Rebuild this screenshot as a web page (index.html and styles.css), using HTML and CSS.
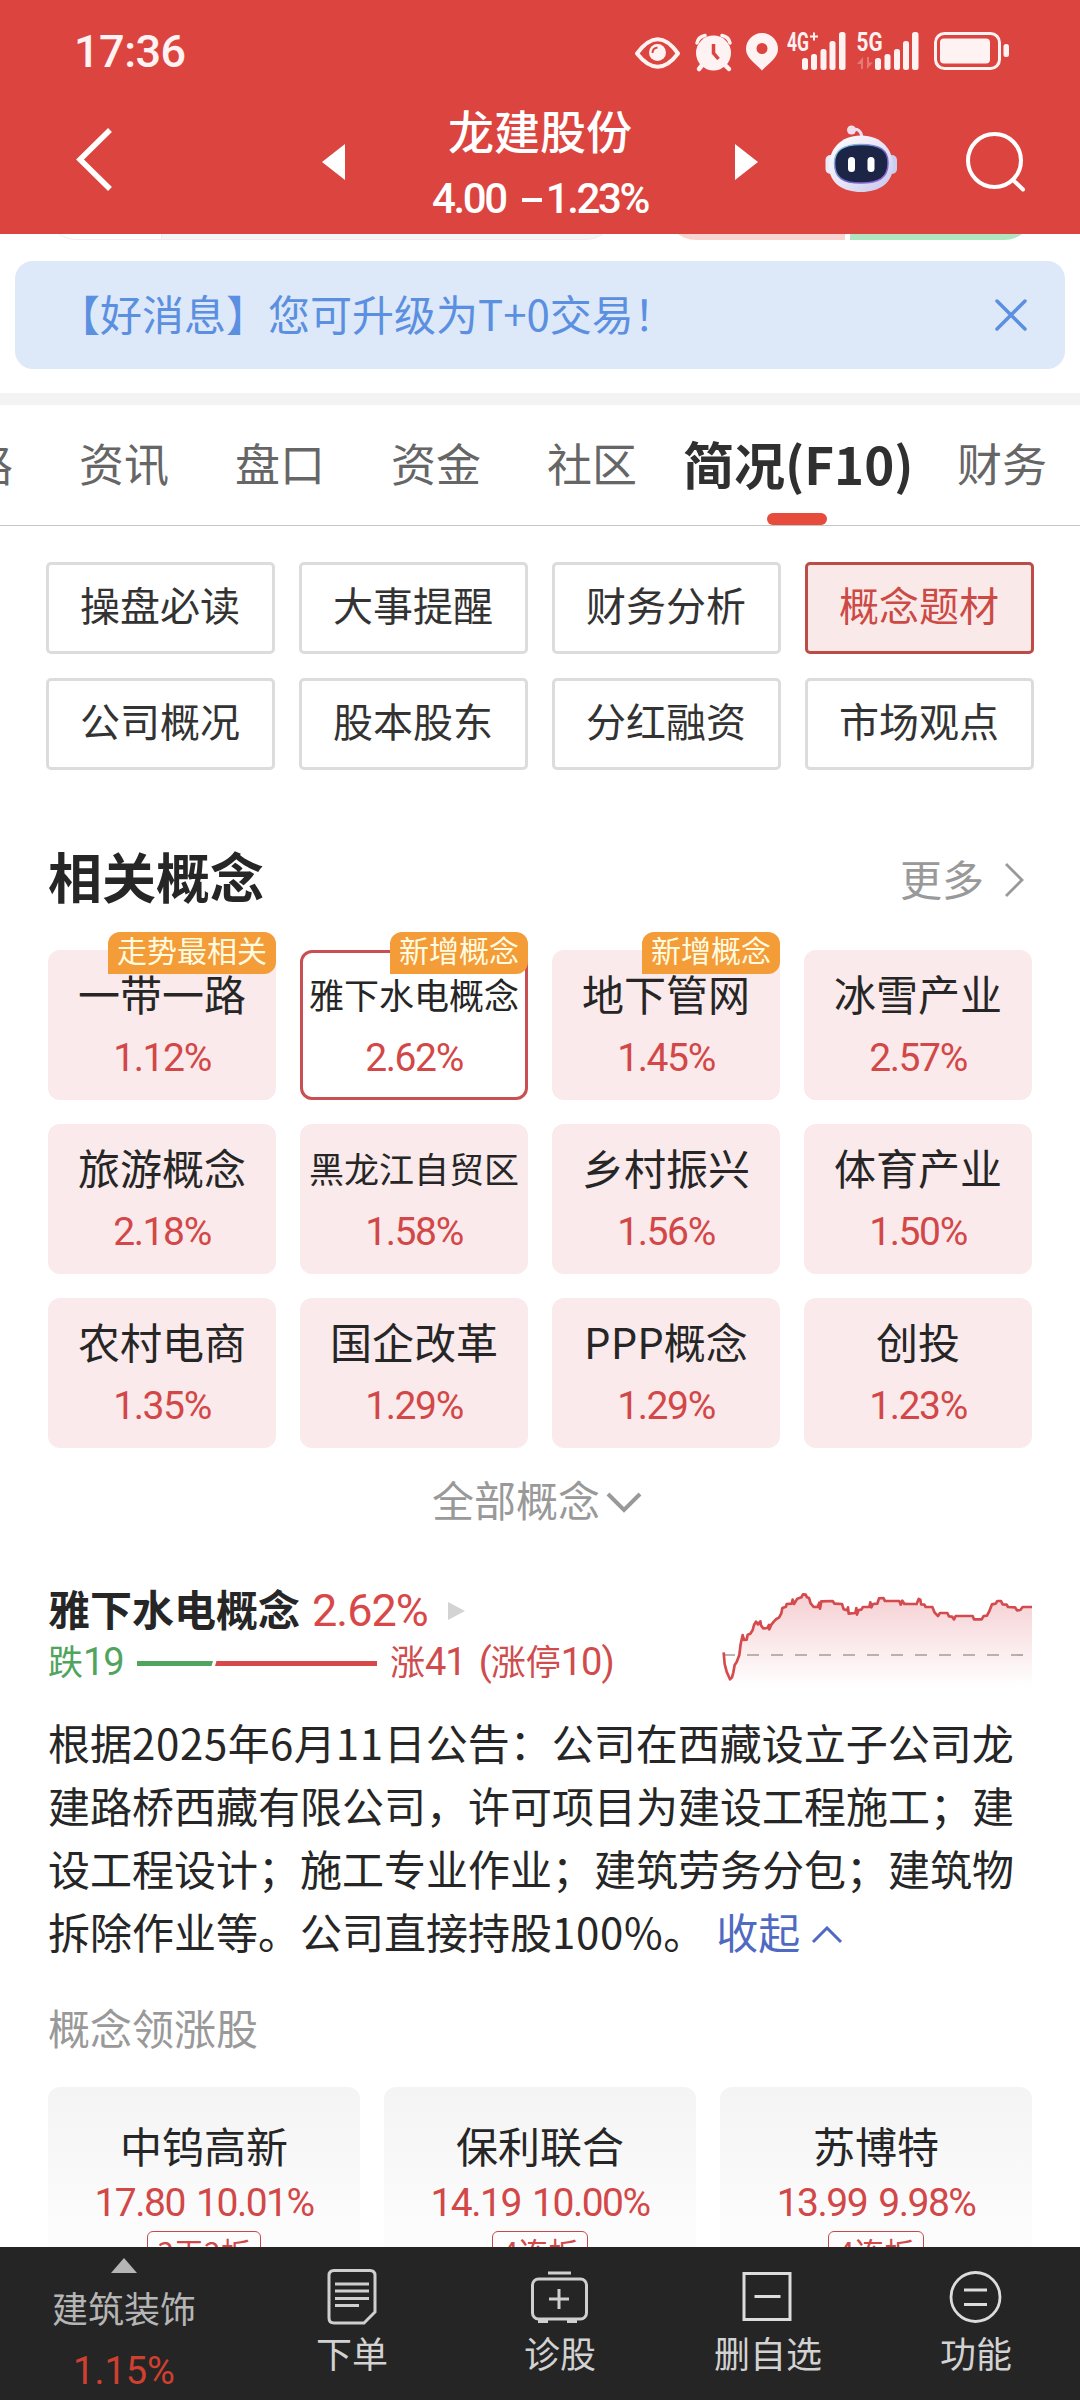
FILE: index.html
```html
<!DOCTYPE html>
<html lang="zh-CN">
  <head>
    <meta charset="UTF-8" />
    <meta name="viewport" content="width=device-width, initial-scale=1.0" />
    <title>龙建股份</title>
    <link rel="stylesheet" href="styles.css">
  </head>
  <body>
    <div class="page">
      <header class="header">
        <div class="status-bar">
          <span class="time">17:36</span>
          <svg class="status-icons" width="380" height="44" viewBox="632 30 380 44">
            <g fill="#fff2f2">
              <path d="M637 53.500Q658 25 678 53.500Q658 80 637 53.500Z" fill="none" stroke="#fff2f2" stroke-width="4" stroke-linejoin="round" />
              <circle cx="657.500" cy="52.500" r="8.500" />
              <path d="M652.500 53Q652.500 48 657.500 47.500" fill="none" stroke="#dc4440" stroke-width="2" />
              <circle cx="713.500" cy="53" r="17.500" />
              <path d="M697 43Q698 37 705 35.500M730 43Q729 37 722 35.500" fill="none" stroke="#fff2f2" stroke-width="3.500" stroke-linecap="round" />
              <path d="M703 64L699 69M724 64L729 69" stroke="#fff2f2" stroke-width="4.500" stroke-linecap="round" />
              <path d="M713.500 44V53L718.500 59" fill="none" stroke="#dc4440" stroke-width="3.500" />
              <path fill-rule="evenodd" d="M762 33a16 16 0 0 1 16 16c0 9-9 14-16 21.500c-7-7.500-16-12.500-16-21.500a16 16 0 0 1 16-16zM762 43a5.500 5.500 0 1 0 0 11a5.500 5.500 0 1 0 0-11z" />
              <text class="net" x="787" y="51" textLength="22" lengthAdjust="spacingAndGlyphs">4G</text>
              <path d="M810 36.500H818M814 32.500V40.500" stroke="#fff2f2" stroke-width="2" />
              <rect x="802" y="58" width="6" height="12" rx="2.500" />
              <rect x="811" y="54" width="6" height="16" rx="2.500" />
              <rect x="820.500" y="49" width="6" height="21" rx="2.500" />
              <rect x="829.500" y="41" width="6" height="29" rx="2.500" />
              <rect x="839" y="32" width="6.500" height="38" rx="2.500" />
              <text class="net" x="856.500" y="51" textLength="26" lengthAdjust="spacingAndGlyphs">5G</text>
              <path d="M857 64L863 57V69H861V64ZM867 57V69L873 62.500H869V57Z" opacity=".3" />
              <rect x="875" y="58" width="6" height="12" rx="2.500" />
              <rect x="884.500" y="54" width="6" height="16" rx="2.500" />
              <rect x="894" y="49" width="6" height="21" rx="2.500" />
              <rect x="903" y="41" width="6" height="29" rx="2.500" />
              <rect x="912" y="32" width="6.500" height="38" rx="2.500" />
              <rect x="935.500" y="33.500" width="64" height="35" rx="9" fill="none" stroke="#fff2f2" stroke-width="3" />
              <rect x="940" y="38.500" width="50" height="25" rx="4" />
              <rect x="1003.500" y="44" width="5.500" height="13" rx="2.500" />
            </g>
          </svg>
        </div>
        <div class="nav-bar">
          <svg class="back" width="40" height="68" viewBox="75 125 40 68"><path d="M110 130L80 159.500L110 189" fill="none" stroke="#fff" stroke-width="5.500" /></svg>
          <svg class="prev" width="23" height="36" viewBox="0 0 23 36"><path d="M0 18L23 0V36Z" fill="#fff" /></svg>
          <div class="stock">
            <h1>龙建股份</h1>
            <p class="quote"><span>4.00</span><i></i><span>1.23%</span></p>
          </div>
          <svg class="next" width="23" height="36" viewBox="0 0 23 36"><path d="M23 18L0 0V36Z" fill="#fff" /></svg>
          <svg class="robot" width="74" height="70" viewBox="824 124 74 70">
            <defs>
              <linearGradient id="shell" x1="0" y1="0" x2="1" y2="1">
                <stop offset="0" stop-color="#fff" />
                <stop offset=".55" stop-color="#e6e3f6" />
                <stop offset="1" stop-color="#c3c4ea" />
              </linearGradient>
              <linearGradient id="rim" x1="0" y1="0" x2="1" y2="1">
                <stop offset="0" stop-color="#8edcf0" />
                <stop offset=".6" stop-color="#6b5fc4" />
                <stop offset="1" stop-color="#a06be0" />
              </linearGradient>
            </defs>
            <path d="M851 130Q861 127 862 138" fill="none" stroke="#e9dff2" stroke-width="3" />
            <circle cx="851.500" cy="130" r="4.500" fill="#f1dff0" />
            <rect x="825.500" y="155" width="10" height="19" rx="5" fill="#e9e9f8" />
            <rect x="887" y="155" width="10" height="19" rx="5" fill="#c9cdf2" />
            <path d="M861 135.500C882 135.500 893 150 893 166C893 183 879 192 861 192C843 192 829 183 829 166C829 150 840 135.500 861 135.500Z" fill="url(#shell)" />
            <path d="M861 144.500C880 144.500 888 150 888 163C888 178 879 183 861 183C843 183 834.500 178 834.500 163C834.500 150 843 144.500 861 144.500Z" fill="#1c2545" stroke="url(#rim)" stroke-width="1.500" />
            <rect x="848" y="157" width="7" height="15" rx="3.500" fill="#fff" />
            <rect x="867.500" y="157" width="7" height="15" rx="3.500" fill="#fff" />
          </svg>
          <svg class="search" width="64" height="64" viewBox="963 129 64 64"><g fill="none" stroke="#fff" stroke-width="4"><ellipse cx="994.500" cy="160.500" rx="26.500" ry="26.500" /><path d="M1013 180L1023 189.500" stroke-linecap="round" /></g></svg>
        </div>
      </header>

      <main class="content">
        <!-- bottom edge of the order book scrolled under the header -->
        <div class="peek">
          <div class="peek-left"></div>
          <div class="peek-buy"></div>
          <div class="peek-sell"></div>
        </div>
        <div class="notice">
          <span>【好消息】您可升级为T+0交易！</span>
          <svg width="32" height="32" viewBox="0 0 32 32"><path d="M2 2L30 30M30 2L2 30" stroke="#5b8fe0" stroke-width="3.500" stroke-linecap="round" /></svg>
        </div>
        <div class="divider"></div>

        <nav class="tabs">
          <a>思路</a><a>资讯</a><a>盘口</a><a>资金</a><a>社区</a><a class="active">简况(F10)</a><a>财务</a>
        </nav>

        <div class="menu">
          <a>操盘必读</a>
          <a>大事提醒</a>
          <a>财务分析</a>
          <a class="active">概念题材</a>
          <a>公司概况</a>
          <a>股本股东</a>
          <a>分红融资</a>
          <a>市场观点</a>
        </div>

        <div class="section-head">
          <h2>相关概念</h2>
          <a class="more">更多<svg width="22" height="36" viewBox="0 0 22 36"><path d="M3 2L19 18L3 34" fill="none" stroke="#999" stroke-width="2.800" /></svg></a>
        </div>

        <div class="concepts">
          <div class="concept"><em>走势最相关</em><b>一带一路</b><span>1.12%</span></div>
          <div class="concept selected"><em>新增概念</em><b class="small">雅下水电概念</b><span>2.62%</span></div>
          <div class="concept"><em>新增概念</em><b>地下管网</b><span>1.45%</span></div>
          <div class="concept"><b>冰雪产业</b><span>2.57%</span></div>
          <div class="concept"><b>旅游概念</b><span>2.18%</span></div>
          <div class="concept"><b class="small">黑龙江自贸区</b><span>1.58%</span></div>
          <div class="concept"><b>乡村振兴</b><span>1.56%</span></div>
          <div class="concept"><b>体育产业</b><span>1.50%</span></div>
          <div class="concept"><b>农村电商</b><span>1.35%</span></div>
          <div class="concept"><b>国企改革</b><span>1.29%</span></div>
          <div class="concept"><b>PPP概念</b><span>1.29%</span></div>
          <div class="concept"><b>创投</b><span>1.23%</span></div>
        </div>

        <a class="all">全部概念<svg width="36" height="24" viewBox="0 0 36 24"><path d="M2 3L18 19L34 3" fill="none" stroke="#999" stroke-width="4" /></svg></a>

        <div class="detail">
          <div class="detail-info">
            <div class="detail-title">
              <h3>雅下水电概念</h3>
              <span class="rate">2.62%</span>
              <svg width="17" height="18" viewBox="0 0 17 18"><path d="M0 0L17 9L0 18Z" fill="#d3d3d3" /></svg>
            </div>
            <div class="updown">
              <span class="down">跌<i>19</i></span>
              <svg width="240" height="5" viewBox="0 0 240 5"><path d="M0 0H76L74.500 5H0Z" fill="#51a45e" /><path d="M79.500 0H240V5H78Z" fill="#d94848" /></svg>
              <span class="up">涨<i>41</i><i class="paren">(</i>涨停<i>10</i><i>)</i></span>
            </div>
          </div>
          <svg class="chart" width="314" height="100" viewBox="60 90 942 300">
            <defs>
              <linearGradient id="area" x1="0" y1="100" x2="0" y2="380" gradientUnits="userSpaceOnUse">
                <stop offset="0" stop-color="#f5cfd2" />
                <stop offset="1" stop-color="#fff" />
              </linearGradient>
            </defs>
            <path fill="url(#area)" d="M71 278L74 320L90 357L104 315L118 285L128 235L150 220L168 187L190 204L210 200L238 172L250 141L275 130L300 112L315 104L338 140L365 123L400 123L425 131L440 151L460 158L490 141L525 132L540 113L560 123L605 124L650 132L675 139L698 141L714 165L742 160L760 174L780 168L818 168L824 177L845 177L865 162L878 132L900 123L920 134L955 150L970 141H996V380H71Z" />
            <path d="M69 285H970" stroke="#a79a9b" stroke-width="5" stroke-dasharray="36 36" />
            <path fill="none" stroke="#d44a4d" stroke-width="8" stroke-linejoin="round" d="M71 277L74 312L80 335L90 358L96 352L100 337L104 315L110 306L118 285L122 252L128 225L132 240L140 239L143 224L151 221L158 210L162 195L168 185L174 193L181 184L183 196L190 205L202 204L207 195L208 208L214 194L222 184L229 177L237 173L244 160L247 144L258 140L260 132L275 131L278 119L282 132L292 116L304 112L309 103L317 104L321 112L327 114L332 130L341 141L353 141L358 128L360 146L364 124L398 123L403 131L426 132L431 148L441 151L444 142L446 161L466 159L469 144L471 164L476 150L484 149L489 141L508 141L511 127L514 142L519 132L532 131L537 115L550 114L555 123L598 123L602 134L607 122L613 132L650 132L656 117L661 119L663 133L673 134L677 141L697 141L704 158L714 168L720 159L742 159L747 169L756 170L762 178L767 168L818 168L822 178L845 178L851 168L861 167L869 151L876 133L887 131L892 123L903 123L908 133L920 134L924 141L945 142L951 151L961 150L968 141H996" />
          </svg>
        </div>

        <p class="desc">根据<i>2025</i>年<i>6</i>月<i>11</i>日公告：公司在西藏设立子公司龙<br />建路桥西藏有限公司，许可项目为建设工程施工；建<br />设工程设计；施工专业作业；建筑劳务分包；建筑物<br />拆除作业等。公司直接持股<i>100%</i>。<a class="fold">收起<svg width="32" height="18" viewBox="0 0 32 18"><path d="M2 16L16 2L30 16" fill="none" stroke="#5069c2" stroke-width="3" /></svg></a></p>

        <h4>概念领涨股</h4>
        <div class="leaders">
          <div class="leader"><b>中钨高新</b><span>17.80 10.01%</span><em>3天2板</em></div>
          <div class="leader"><b>保利联合</b><span>14.19 10.00%</span><em>4连板</em></div>
          <div class="leader"><b>苏博特</b><span>13.99 9.98%</span><em>4连板</em></div>
        </div>
      </main>

      <footer class="toolbar">
        <a class="industry">
          <svg width="26" height="15" viewBox="0 0 26 15"><path d="M13 0L26 15H0Z" fill="#b5b5b5" /></svg>
          <span>建筑装饰</span>
          <i>1.15%</i>
        </a>
        <a>
          <svg width="60" height="60" viewBox="0 0 60 60"><g fill="none" stroke="#cfcfcf" stroke-width="3"><path d="M12 4.500H48Q53 4.500 53 9.500V46L42 57H12Q7 57 7 52V9.500Q7 4.500 12 4.500Z" /><path d="M13 18H47M13 25H47M13 32.500H47M13 39.500H37" /></g></svg>
          <span>下单</span>
        </a>
        <a>
          <svg width="60" height="60" viewBox="0 0 60 60"><g fill="none" stroke="#cfcfcf" stroke-width="3"><rect x="2.500" y="13" width="54" height="40" rx="6" /><path d="M18 7H41M29 23V43M19 33H39" /><path d="M8 55H18M37 55H47" stroke-width="4" /></g></svg>
          <span>诊股</span>
        </a>
        <a>
          <svg width="60" height="60" viewBox="0 0 60 60"><g fill="none" stroke="#dcdcdc" stroke-width="3"><rect x="6" y="7.500" width="46" height="46" /><path d="M16.500 30.500H42.500" /></g></svg>
          <span>删自选</span>
        </a>
        <a>
          <svg width="60" height="60" viewBox="0 0 60 60"><g fill="none" stroke="#dcdcdc" stroke-width="2.800"><circle cx="29.500" cy="31" r="24.500" /><path d="M18 24H41M18 38.500H41" /></g></svg>
          <span>功能</span>
        </a>
      </footer>
    </div>
  </body>
</html>
```
FILE: styles.css
```css
* {
  box-sizing: border-box;
  margin: 0;
  padding: 0;
}

body {
  width: 1080px;
  background: #fff;
  color: #262626;
  font-family: "Noto Sans CJK SC", sans-serif;
}

svg {
  display: block;
  flex: none;
}

i, em {
  font-style: normal;
}

.page {
  display: flex;
  flex-direction: column;
  height: 2400px;
  overflow: hidden;
}

/* header */
.header {
  flex: none;
  height: 234px;
  background: #dc4440;
  color: #fff;
}

.status-bar {
  display: flex;
  justify-content: space-between;
  height: 104px;
  padding: 30px 68px 0 74px;
}

.time {
  height: 44px;
  line-height: 43px;
  font-family: Roboto, sans-serif;
  font-size: 45px;
  font-weight: 500;
  letter-spacing: -0.500px;
  color: #fff2f2;
}

.net {
  font-family: Roboto, sans-serif;
  font-size: 26px;
  font-weight: 700;
}

.nav-bar {
  display: flex;
  height: 130px;
  padding-left: 75px;
}

.back {
  margin-top: 21px;
}

.prev {
  margin: 40px 0 0 207px;
}

.stock {
  width: 390px;
  text-align: center;
}

.stock h1 {
  height: 56px;
  line-height: 51px;
  font-size: 46px;
  font-weight: 500;
}

.quote {
  display: flex;
  justify-content: center;
  align-items: center;
  height: 78px;
  line-height: 78px;
  font-family: Roboto, sans-serif;
  font-size: 42px;
  font-weight: 500;
  letter-spacing: -2.400px;
}

.quote i {
  width: 20px;
  height: 4px;
  margin: 2px 4px 0 16px;
  background: #fff;
}

.next {
  margin-top: 40px;
}

.robot {
  margin: 20px 0 0 66px;
}

.search {
  margin: 25px 0 0 65px;
}

/* notice */
.content {
  flex: 1;
  min-height: 0;
  overflow: hidden;
}

.peek {
  display: flex;
  align-items: flex-end;
  height: 6px;
  padding-left: 46px;
  overflow: hidden;
}

.peek div {
  flex: none;
  height: 60px;
}

.peek-left {
  width: 570px;
  border: 1px solid #ededed;
  border-radius: 30px;
  background: linear-gradient(to right, #fff 114px, #ededed 114px, #ededed 115px, #f5f5f5 115px);
}

.peek-buy {
  width: 179px;
  margin-left: 50px;
  border-radius: 30px 0 0 30px;
  background: #fad5d0;
}

.peek-sell {
  width: 184px;
  margin-left: 5px;
  border-radius: 0 30px 30px 0;
  background: #afe5bf;
}

.notice {
  display: flex;
  justify-content: space-between;
  height: 108px;
  margin: 21px 15px 24px;
  padding: 0 38px 0 43px;
  border-radius: 18px;
  background: #dde8f9;
  color: #5b8fe0;
  font-size: 42px;
  line-height: 104px;
}

.notice svg {
  margin-top: 38px;
}

.divider {
  height: 12px;
  background: #f3f3f3;
}

/* tabs */
.tabs {
  display: flex;
  height: 121px;
  border-bottom: 1px solid #c5c5c5;
  line-height: 116px;
  font-size: 45px;
  color: #666;
  white-space: nowrap;
  margin-left: -77px;
}

.tabs a {
  flex: none;
  width: 90px;
  margin-right: 66px;
}

.tabs a:nth-child(5) {
  margin-right: 46px;
}

.tabs .active {
  position: relative;
  width: 228px;
  margin-right: 46px;
  color: #303030;
  font-size: 51px;
  font-weight: 700;
  text-align: center;
}

.tabs .active::after {
  content: "";
  position: absolute;
  left: 84px;
  bottom: 0;
  width: 60px;
  height: 12px;
  border-radius: 6px;
  background: #e64b3c;
}

.menu {
  display: grid;
  grid-template-columns: repeat(4, 229px);
  gap: 24px;
  padding: 36px 46px 0;
}

.menu a {
  height: 92px;
  padding-right: 1px;
  border: 3px solid #dcdcdc;
  border-radius: 5px;
  color: #333;
  font-size: 40px;
  line-height: 78px;
  text-align: center;
}

.menu .active {
  border-color: #bd4b47;
  background: #fae9e9;
  color: #cc4a45;
}

/* concepts */
.section-head {
  display: flex;
  justify-content: space-between;
  height: 180px;
  padding: 69px 55px 0 48px;
  line-height: 73px;
}

.section-head h2 {
  font-size: 54px;
  font-weight: 700;
}

.more {
  display: flex;
  align-items: center;
  height: 76px;
  gap: 19px;
  color: #999;
  font-size: 42px;
}

.more svg {
  margin-top: 5px;
}

.concepts {
  display: grid;
  grid-template-columns: repeat(4, 228px);
  gap: 24px;
  padding: 0 48px;
}

.concept {
  position: relative;
  height: 150px;
  padding-top: 13px;
  border-radius: 12px;
  background: #faeaeb;
  text-align: center;
}

.concept.selected {
  padding-top: 10px;
  border: 3px solid #c94f52;
  background: #fff;
}

.concept b {
  display: block;
  font-size: 42px;
  font-weight: 400;
  line-height: 60px;
  white-space: nowrap;
}

.concept .small {
  padding-top: 1px;
  font-size: 35px;
  line-height: 59px;
}

.concept span {
  display: block;
  color: #d24747;
  font-family: Roboto, sans-serif;
  font-size: 39px;
  line-height: 71px;
  letter-spacing: -1.400px;
}

.concept em {
  position: absolute;
  top: -18px;
  right: 0;
  height: 42px;
  padding: 0 9px;
  border-radius: 12px 12px 12px 0;
  background: #f39c38;
  color: #fffbe0;
  font-size: 30px;
  line-height: 34px;
}

.selected em {
  top: -21px;
  right: -3px;
}

.all {
  display: flex;
  align-items: center;
  height: 104px;
  padding: 0 0 3px 432px;
  gap: 6px;
  color: #999;
  font-size: 42px;
}

.all svg {
  margin-top: 9px;
}

/* concept detail */
.detail {
  display: flex;
  justify-content: space-between;
  height: 158px;
  padding: 24px 46px 0 48px;
}

.detail-title {
  display: flex;
  align-items: center;
  height: 64px;
}

.detail-title h3 {
  font-size: 42px;
  font-weight: 700;
  line-height: 60px;
}

.rate {
  margin: 5px 0 0 12px;
  color: #d94848;
  font-family: Roboto, sans-serif;
  font-size: 45px;
  letter-spacing: -1px;
}

.detail-title svg {
  margin: 5px 0 0 20px;
}

.updown {
  display: flex;
  align-items: center;
  height: 42px;
  font-size: 35px;
  line-height: 38px;
  white-space: nowrap;
}

.updown i {
  font-family: Roboto, sans-serif;
  font-size: 38px;
  letter-spacing: -1px;
}

.updown .paren {
  margin-left: 13px;
}

.down {
  width: 89px;
  color: #51a45e;
}

.up {
  margin-left: 13px;
  color: #d04c4c;
}

.updown svg {
  margin-top: 5px;
}

.chart {
  margin-top: 14px;
}

.desc {
  padding-left: 48px;
  font-size: 42px;
  line-height: 63px;
  white-space: nowrap;
}

.desc i {
  letter-spacing: 0.650px;
}

.fold {
  margin-left: 11px;
  color: #5069c2;
}

.fold svg {
  display: inline-block;
  margin: 0 0 5px 11px;
}

/* leading stocks */
h4 {
  height: 125px;
  padding: 31px 48px 0;
  color: #999;
  font-size: 42px;
  font-weight: 400;
  line-height: 67px;
}

.leaders {
  display: grid;
  grid-template-columns: repeat(3, 312px);
  gap: 24px;
  padding: 0 48px;
}

.leader {
  display: flex;
  flex-direction: column;
  align-items: center;
  height: 240px;
  padding-top: 28px;
  border-radius: 12px;
  background: linear-gradient(#f4f4f4, #fdfdfd 160px);
}

.leader b {
  font-size: 42px;
  font-weight: 400;
  line-height: 60px;
}

.leader span {
  color: #d24747;
  font-family: Roboto, sans-serif;
  font-size: 39px;
  line-height: 56px;
  letter-spacing: -1.500px;
  word-spacing: 3px;
}

.leader em {
  height: 44px;
  padding: 0 9px;
  border: 1px solid #c44a4c;
  border-radius: 6px;
  color: #d24747;
  font-size: 30px;
  line-height: 38px;
}

/* bottom toolbar */
.toolbar {
  display: flex;
  flex: none;
  height: 153px;
  background: #252525;
}

.toolbar a {
  display: flex;
  flex-direction: column;
  align-items: center;
  width: 208px;
  padding-top: 19px;
  color: #d2d2d2;
  font-size: 36px;
}

.toolbar span {
  line-height: 54px;
}

.toolbar a span {
  margin-top: -1px;
}

.toolbar .industry {
  width: 248px;
  padding-top: 11px;
  color: #b5b5b5;
}

.toolbar .industry span {
  margin-top: 7px;
}

.industry i {
  margin-top: 9px;
  color: #cf4030;
  font-family: Roboto, sans-serif;
  font-size: 38px;
  line-height: 56px;
}
```
